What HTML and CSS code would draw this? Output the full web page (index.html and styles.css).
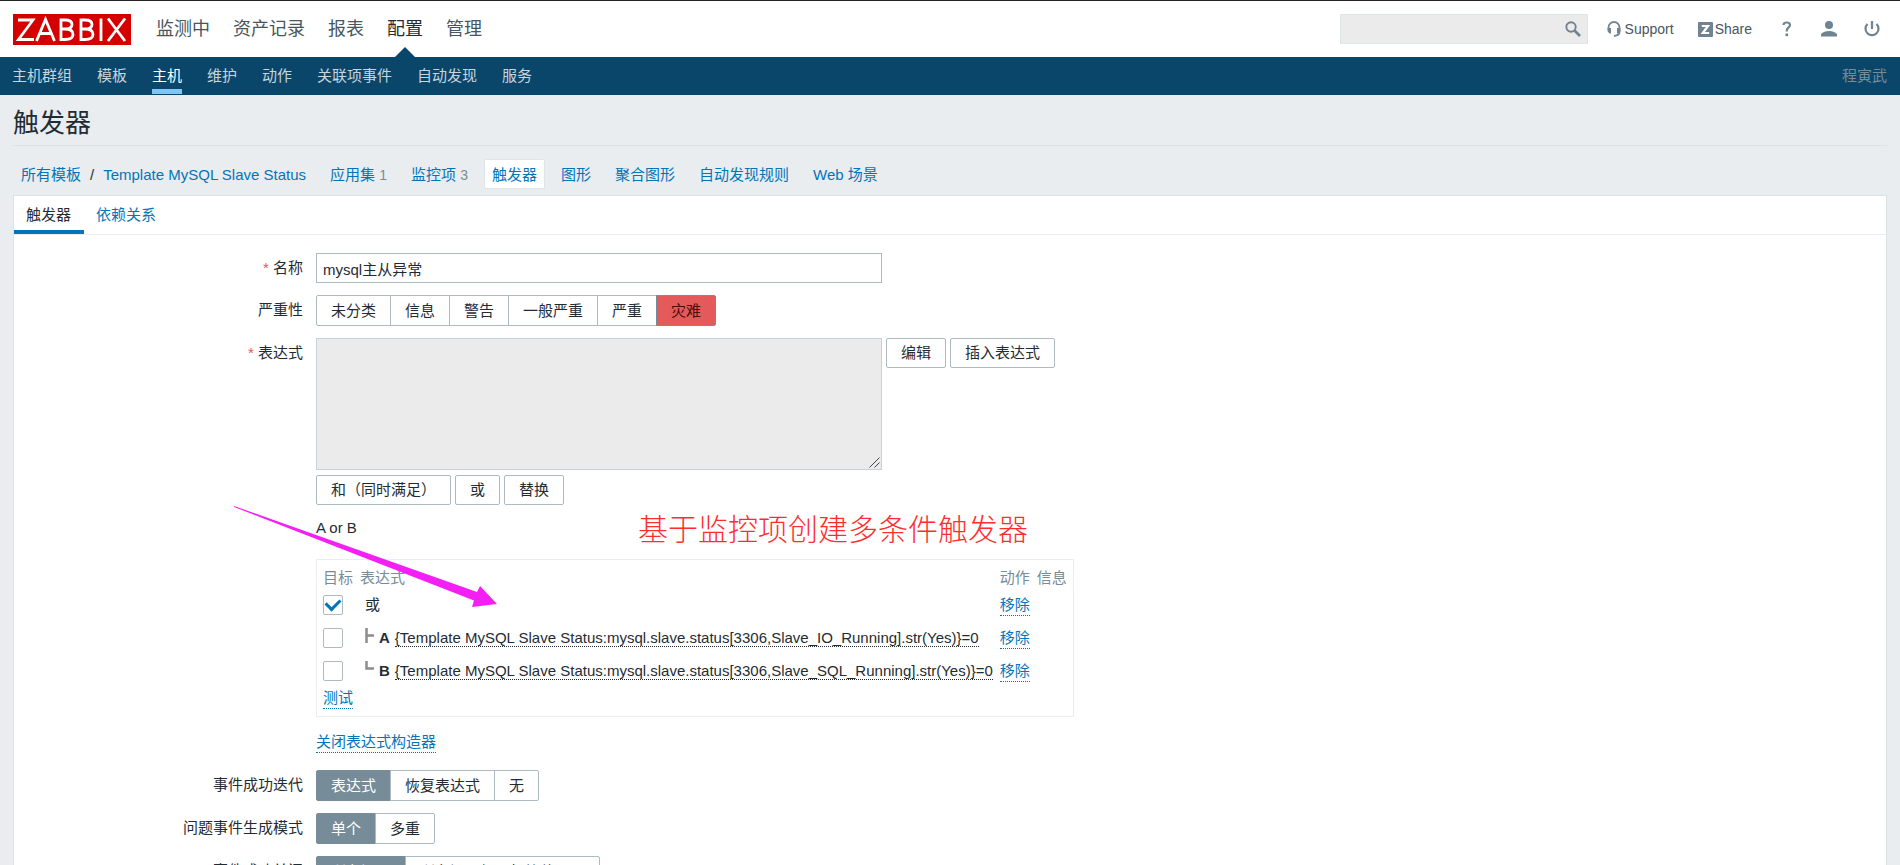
FILE: index.html
```html
<!DOCTYPE html>
<html lang="zh-CN">
<head>
<meta charset="utf-8">
<title>触发器</title>
<link rel="stylesheet" href="styles.css">
</head>
<body>
<header class="top">
  <a class="logo" href="#">
    <svg viewBox="0 0 118 31" role="img" aria-label="ZABBIX"><rect width="118" height="31" fill="#d40000"/><g fill="none" stroke="#fff" stroke-width="2.800"><path d="M5 6H20L5.500 25.500H21M23.500 27L32.500 5.500L41.500 27M27 19.500H38M48 4.500V27M47 6H52Q59 6 59 10.500Q59 15 52 15H48M52 15Q60 15 60 20.500Q60 25.500 52 25.500H47M68 4.500V27M67 6H72Q79 6 79 10.500Q79 15 72 15H68M72 15Q80 15 80 20.500Q80 25.500 72 25.500H67M88 4.500V27M95 4.500L112 27M112 4.500L95 27"/></g></svg>
  </a>
  <nav class="main-nav">
    <a href="#">监测中</a><a href="#">资产记录</a><a href="#">报表</a><a class="current" href="#">配置</a><a href="#">管理</a>
  </nav>
  <div class="tools">
    <form class="search">
      <input type="text" aria-label="搜索">
      <button type="button" aria-label="搜索"><svg width="16" height="16" viewBox="0 0 16 16"><circle cx="6" cy="6" r="4.700" fill="none" stroke="#6f8490" stroke-width="1.900"/><path d="M9.500 9.500L15 15" stroke="#6f8490" stroke-width="2.600"/></svg></button>
    </form>
    <a class="tool" href="#"><svg width="14" height="16" viewBox="0 0 14 16"><path d="M1.500 9V6.500a5.500 5.500 0 0 1 11 0V11q0 3.500-5.500 4" fill="none" stroke="#6f8490" stroke-width="1.800"/><path d="M.6 7h3.400v5.500H2.500L.6 10.500zM13.400 7h-3.400v5.500h1.500L13.400 10.500z" fill="#6f8490"/></svg>Support</a>
    <a class="tool share" href="#"><svg width="15" height="15" viewBox="0 0 15 15"><rect width="15" height="15" rx="1" fill="#6f8490"/><path d="M3.800 4H10L4.800 11H11.200" fill="none" stroke="#fff" stroke-width="2.200"/></svg>Share</a>
    <a class="icon" href="#" aria-label="帮助"><svg width="10" height="16" viewBox="0 0 10 16"><path d="M1.500 4Q1.500 1.500 4.700 1.500Q8 1.500 8 4Q8 5.500 6 7Q4.700 8 4.700 10.500" fill="none" stroke="#6f8490" stroke-width="2.200"/><rect x="3.500" y="12.500" width="2.600" height="2.600" fill="#6f8490"/></svg></a>
    <a class="icon user" href="#" aria-label="用户"><svg width="16" height="16" viewBox="0 0 16 16" fill="#6f8490"><circle cx="8" cy="4" r="4"/><path d="M0 15.500V13Q3 10 8 10T16 13V15.500z"/></svg></a>
    <a class="icon power" href="#" aria-label="退出"><svg width="16" height="16" viewBox="0 0 16 16"><path d="M3.500 3A6.500 6.500 0 1 0 12.500 3M8 0V8" fill="none" stroke="#6f8490" stroke-width="2.200"/></svg></a>
  </div>
</header>
<nav class="sub-nav">
  <a href="#">主机群组</a><a href="#">模板</a><a class="current" href="#">主机</a><a href="#">维护</a><a href="#">动作</a><a href="#">关联项事件</a><a href="#">自动发现</a><a href="#">服务</a>
  <span class="who">程寅武</span>
</nav>
<main>
  <h1>触发器</h1>
  <nav class="crumbs">
    <span class="path"><a href="#">所有模板</a><span>/</span><a href="#">Template MySQL Slave Status</a></span>
    <span><a href="#">应用集</a> <small>1</small></span>
    <span><a href="#">监控项</a> <small>3</small></span>
    <a class="selected" href="#">触发器</a>
    <a href="#">图形</a>
    <a href="#">聚合图形</a>
    <a href="#">自动发现规则</a>
    <a href="#">Web 场景</a>
  </nav>
  <section class="panel">
    <div class="tabs"><a class="active" href="#">触发器</a><a href="#">依赖关系</a></div>
    <form class="form">
      <label class="label required" for="name">名称</label>
      <div><input class="name" id="name" type="text" value="mysql主从异常"></div>

      <span class="label">严重性</span>
      <div class="segments severity">
        <label><input type="radio" name="sev">未分类</label><label><input type="radio" name="sev">信息</label><label><input type="radio" name="sev">警告</label><label><input type="radio" name="sev">一般严重</label><label><input type="radio" name="sev">严重</label><label><input type="radio" name="sev" checked>灾难</label>
      </div>

      <label class="label required" for="expr">表达式</label>
      <div class="expression">
        <div class="row"><span class="area"><textarea id="expr" readonly></textarea><svg class="grip" width="11" height="11" viewBox="0 0 11 11"><path d="M.5 10.500L10.500.5M5.500 10.500L10.500 5.500" stroke="#444" fill="none"/></svg></span><button type="button">编辑</button><button type="button">插入表达式</button></div>
        <div class="row"><button type="button">和（同时满足）</button><button type="button">或</button><button type="button">替换</button></div>
        <p class="formula">A or B</p>
        <div class="builder">
          <table>
            <thead><tr><th>目标</th><th>表达式</th><th>动作</th><th>信息</th></tr></thead>
            <tbody>
              <tr><td><input type="checkbox" aria-label="或" checked></td><td><span class="node">或</span></td><td><button class="link" type="button">移除</button></td><td></td></tr>
              <tr><td><input type="checkbox" aria-label="A"></td><td><span class="node"><svg width="9" height="15" viewBox="0 0 9 15"><path d="M1.500 0V15M1.500 7.500H9" fill="none" stroke="#8c8c8c" stroke-width="2.500"/></svg><b>A</b><a class="expr" href="#">{Template MySQL Slave Status:mysql.slave.status[3306,Slave_IO_Running].str(Yes)}=0</a></span></td><td><button class="link" type="button">移除</button></td><td></td></tr>
              <tr><td><input type="checkbox" aria-label="B"></td><td><span class="node"><svg width="9" height="15" viewBox="0 0 9 15"><path d="M1.500 0V7.500H9" fill="none" stroke="#8c8c8c" stroke-width="2.500"/></svg><b>B</b><a class="expr" href="#">{Template MySQL Slave Status:mysql.slave.status[3306,Slave_SQL_Running].str(Yes)}=0</a></span></td><td><button class="link" type="button">移除</button></td><td></td></tr>
            </tbody>
          </table>
          <button class="link test" type="button">测试</button>
        </div>
        <button class="link close" type="button">关闭表达式构造器</button>
      </div>

      <span class="label">事件成功迭代</span>
      <div class="segments">
        <label><input type="radio" name="rec" checked>表达式</label><label><input type="radio" name="rec">恢复表达式</label><label><input type="radio" name="rec">无</label>
      </div>

      <span class="label">问题事件生成模式</span>
      <div class="segments">
        <label><input type="radio" name="mode" checked>单个</label><label><input type="radio" name="mode">多重</label>
      </div>

      <span class="label">事件成功关闭</span>
      <div class="segments">
        <label><input type="radio" name="corr" checked>所有问题</label><label><input type="radio" name="corr">所有问题如果标签值匹配</label>
      </div>
    </form>
  </section>
</main>
<div class="note">基于监控项创建多条件触发器</div>
<svg class="arrow" width="264" height="103" viewBox="0 0 264 103"><path d="M0 0L243 86L246 80L263 98L238 101L240 94.500L0 1z" fill="#f41ff4"/></svg>
</body>
</html>
```

FILE: styles.css
```css
* { box-sizing: border-box; }
html { overflow: hidden; }
body {
  position: relative;
  margin: 0;
  height: 100vh;
  overflow: hidden;
  background: #e9edf0;
  color: #1f2c33;
  font: 15px/20px "Liberation Sans", "Noto Sans CJK SC", sans-serif;
}
a { color: #0275b8; text-decoration: none; white-space: nowrap; }
button, input, textarea { font: inherit; color: inherit; }

.top {
  display: flex;
  align-items: center;
  height: 57px;
  padding: 0 13px;
  border-top: 1px solid #222;
  background: #fff;
}
.logo svg { display: block; width: 118px; height: 31px; }
.main-nav { display: flex; gap: 23px; height: 56px; margin-left: 25px; font-size: 18px; line-height: 56px; }
.main-nav a { position: relative; color: #48565e; }
.main-nav .current { color: #1f2c33; }
.main-nav .current::after {
  content: "";
  position: absolute;
  left: 8px;
  bottom: 0;
  border: 10px solid transparent;
  border-top: 0;
  border-bottom-color: #0a466a;
}
.tools { display: flex; align-items: center; margin-left: auto; padding-right: 7px; }
.search {
  display: flex;
  align-items: center;
  width: 248px;
  height: 30px;
  margin-right: 19px;
  border: 1px solid #dfe4e7;
  background: #ebebeb;
}
.search input { flex: 1; min-width: 0; border: 0; background: none; outline: 0; }
.search button { padding: 0 6px 0 0; border: 0; background: none; height: 16px; line-height: 0; }
.tool { display: flex; align-items: center; gap: 4px; margin-right: 24px; color: #48565e; font-size: 14px; }
.share { gap: 2px; margin-right: 30px; }
.icon { display: flex; }
.user { margin-left: 29px; }
.power { margin-left: 27px; }

.sub-nav {
  display: flex;
  gap: 25px;
  height: 38px;
  padding: 0 13px 0 12px;
  background: #0a466a;
  line-height: 38px;
}
.sub-nav a { height: 37px; color: #c6d5de; }
.sub-nav .current { border-bottom: 5px solid #7fc5f5; color: #fff; }
.who { margin-left: auto; color: #768d99; }

main { padding: 0 13px; }
h1 {
  margin: 0 0 13px;
  padding: 11px 0 5px;
  border-bottom: 1px solid #dde2e5;
  font-size: 26px;
  font-weight: 400;
  line-height: 34px;
}
.crumbs { display: flex; gap: 8px; height: 30px; margin-bottom: 6px; line-height: 29px; }
.crumbs > * { padding: 0 7px; border: 1px solid transparent; border-radius: 2px; }
.path { display: flex; gap: 9px; }
.crumbs small { color: #768d99; font-size: 14px; }
.crumbs .selected { border-color: #dfe4e7; background: #fff; }

.panel { border: 1px solid #dde2e5; background: #fff; }
.tabs { display: flex; height: 39px; border-bottom: 1px solid #ebeef0; line-height: 37px; }
.tabs a { padding: 0 13px 0 12px; }
.tabs .active { border-bottom: 4px solid #0275b8; color: #1f2c33; }

.form {
  display: grid;
  grid-template-columns: 289px 1fr;
  column-gap: 13px;
  row-gap: 12px;
  padding: 18px 0 12px;
}
.label { padding-top: 5px; text-align: right; }
.required::before { content: "* "; color: #e45959; }
.name {
  display: block;
  width: 566px;
  height: 30px;
  padding: 0 6px;
  border: 1px solid #acbbc2;
  background: #fff;
}
.segments { display: flex; line-height: 29px; }
.segments label {
  margin-right: -1px;
  padding: 0 14px;
  border: 1px solid #acbbc2;
  white-space: nowrap;
}
.segments label:first-child { border-radius: 2px 0 0 2px; }
.segments label:last-child { border-radius: 0 2px 2px 0; }
.segments input { position: absolute; opacity: 0; pointer-events: none; }
.segments label:has(:checked) { border-color: #768d99; background: #768d99; color: #fff; }
.severity label:has(:checked) { background: #e45959; color: #4b0c0c; }

.row { display: flex; align-items: flex-start; gap: 4px; margin-bottom: 5px; }
.area { position: relative; display: flex; }
textarea {
  width: 566px;
  height: 132px;
  border: 1px solid #c8d1d6;
  background: #ebebeb;
  resize: none;
}
.grip { position: absolute; right: 2px; bottom: 2px; }
.row button {
  height: 30px;
  padding: 0 14px;
  border: 1px solid #acbbc2;
  border-radius: 2px;
  background: #fff;
  line-height: 28px;
}
.formula { margin: 13px 0 21px; }
.builder { width: fit-content; padding: 8px 6px 7px; border: 1px solid #ebeef0; }
.builder table { border-collapse: collapse; }
.builder th { padding: 0 7px 0 0; color: #768d99; font-weight: 400; text-align: left; }
.builder td { height: 33px; padding: 0 7px 0 0; white-space: nowrap; }
.builder th:last-child, .builder td:last-child { padding: 0; }
.builder input {
  display: grid;
  place-items: center;
  appearance: none;
  width: 20px;
  height: 20px;
  margin: 0;
  border: 1px solid #acbbc2;
  border-radius: 2px;
}
.builder input:checked::before {
  content: "";
  width: 11px;
  height: 7px;
  margin-bottom: 4px;
  border: solid #0275b8;
  border-width: 0 0 3px 3px;
  transform: rotate(-45deg);
}
.node { display: flex; align-items: center; gap: 5px; padding-left: 5px; }
.node svg { margin-top: -4px; }
.expr { border-bottom: 1px dotted #1f2c33; color: #1f2c33; line-height: 17px; }
.link {
  display: block;
  padding: 0;
  border: 0;
  border-bottom: 1px dotted #0275b8;
  background: none;
  color: #0275b8;
  line-height: 21px;
}
.close { margin: 14px 0 5px; }

.note {
  position: absolute;
  left: 638px;
  top: 510px;
  color: #ff2e2e;
  font-size: 30px;
  font-weight: 300;
  line-height: 40px;
  white-space: nowrap;
}
.arrow { position: absolute; left: 234px; top: 506px; }
```
